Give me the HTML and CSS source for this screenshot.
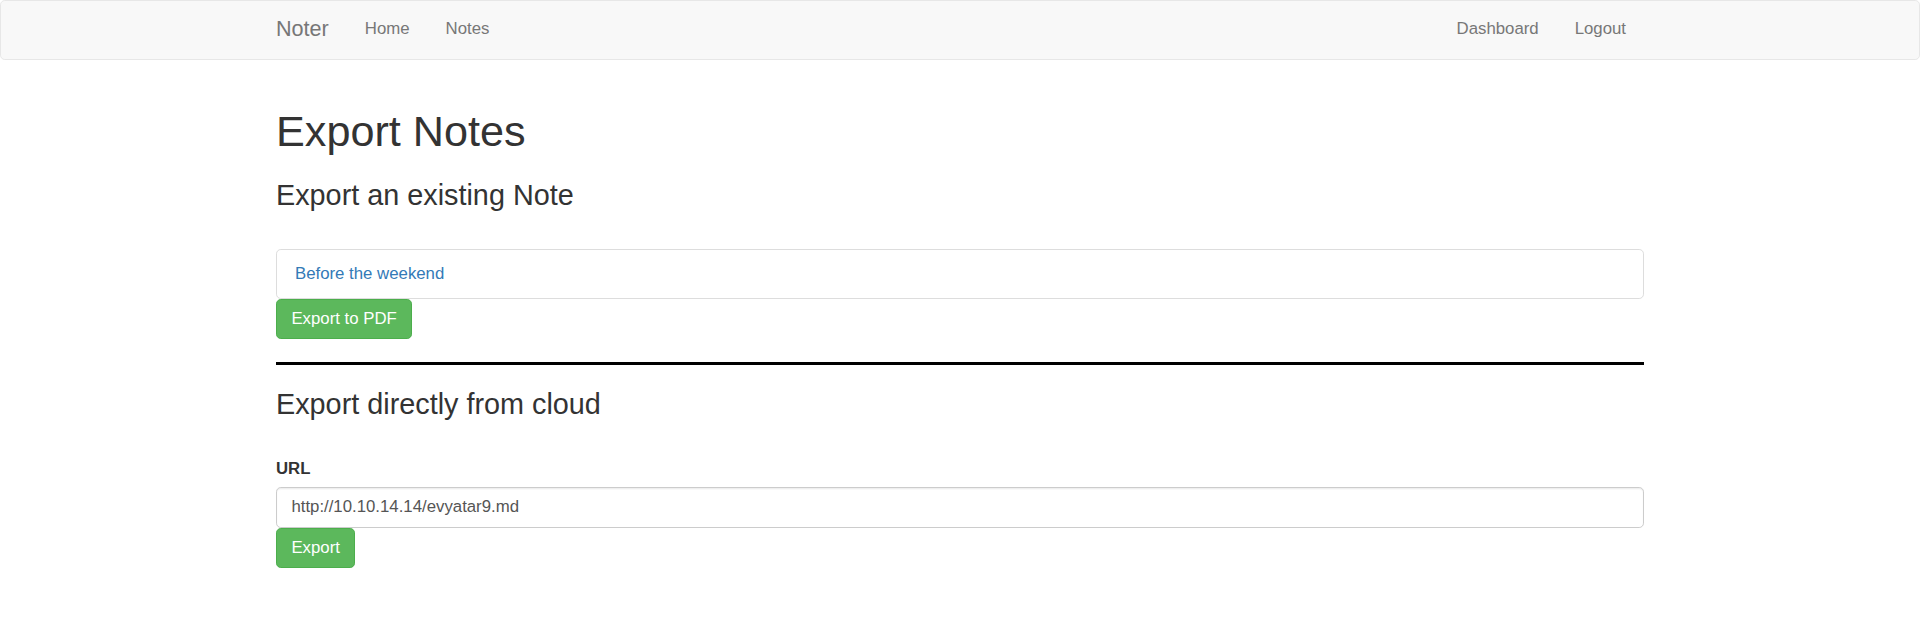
FILE: index.html
```html
<!DOCTYPE html>
<html lang="en">
<head>
<meta charset="utf-8">
<title>Noter</title>
<link rel="stylesheet" href="styles.css">
</head>
<body>
<nav class="navbar">
  <div class="container nav-inner">
    <a class="brand" href="#">Noter</a>
    <ul class="nav">
      <li><a href="#">Home</a></li>
      <li><a href="#">Notes</a></li>
    </ul>
    <ul class="nav nav-right">
      <li><a href="#">Dashboard</a></li>
      <li><a href="#">Logout</a></li>
    </ul>
  </div>
</nav>
<main class="container page">
  <h1>Export Notes</h1>
  <h3>Export an existing Note</h3>
  <form class="export-form">
    <ul class="list-group">
      <li class="list-group-item"><a href="#">Before the weekend</a></li>
    </ul>
    <button type="button" class="btn">Export to PDF</button>
  </form>
  <hr class="divider">
  <h3>Export directly from cloud</h3>
  <form class="cloud-form">
    <label class="field-label" for="url">URL</label>
    <input class="form-control" id="url" type="text" value="http://10.10.14.14/evyatar9.md">
    <button type="button" class="btn">Export</button>
  </form>
</main>
</body>
</html>
```

FILE: styles.css
```css
html, body {
  margin: 0;
  padding: 0;
}
body {
  font-family: "Liberation Sans", Arial, Helvetica, sans-serif;
  font-size: 16.8px;
  line-height: 24px;
  color: #333;
  background: #fff;
}
a {
  color: #337ab7;
  text-decoration: none;
}
.container {
  width: 1404px;
  margin: 0 auto;
  padding: 0 18px;
  box-sizing: border-box;
}
.page {
  display: flow-root;
}
.navbar {
  min-height: 58px;
  background: #f8f8f8;
  border: 1px solid #e7e7e7;
  border-radius: 4.8px;
  margin-bottom: 24px;
}
.nav-inner {
  display: flex;
  align-items: flex-start;
}
.brand {
  display: block;
  margin-left: -18px;
  padding: 16px 18px 18px;
  height: 58px;
  box-sizing: border-box;
  font-size: 21.6px;
  line-height: 24px;
  color: #777;
}
.nav {
  list-style: none;
  margin: 0;
  padding: 0;
  display: flex;
}
.nav a {
  display: block;
  padding: 16px 18px 18px;
  line-height: 24px;
  color: #777;
}
.nav-right {
  margin-left: auto;
}
h1, h3 {
  font-family: inherit;
  font-weight: 500;
  line-height: 1.1;
  color: inherit;
}
h1 {
  font-size: 43.2px;
  margin: 24px 0 12px;
}
h3 {
  font-size: 28.8px;
  margin: 24px 0 12px;
}
.export-form {
  padding-top: 25.5px;
}
.list-group {
  list-style: none;
  margin: 0;
  padding: 0;
}
.list-group-item {
  padding: 12px 18px;
  border: 1px solid #ddd;
  border-radius: 4.8px;
  background: #fff;
}
.btn {
  display: inline-block;
  margin: 0;
  padding: 7.2px 14.4px;
  font-family: inherit;
  font-size: 16.8px;
  line-height: 24px;
  color: #fff;
  background: #5cb85c;
  border: 1px solid #4cae4c;
  border-radius: 4.8px;
  cursor: pointer;
  vertical-align: middle;
}
.divider {
  margin: 23px 0 18.5px;
  border: 0;
  border-top: 3.6px solid #000;
  height: 0;
}
.cloud-form {
  padding-top: 24px;
}
.field-label {
  display: block;
  font-weight: 700;
  margin-bottom: 6px;
}
.form-control {
  display: block;
  width: 100%;
  height: 40.8px;
  box-sizing: border-box;
  padding: 7.2px 14.4px;
  font-family: inherit;
  font-size: 16.8px;
  line-height: 24px;
  color: #555;
  background: #fff;
  border: 1px solid #ccc;
  border-radius: 4.8px;
  box-shadow: inset 0 1.2px 1.2px rgba(0, 0, 0, .075);
  margin: 0;
}
```
